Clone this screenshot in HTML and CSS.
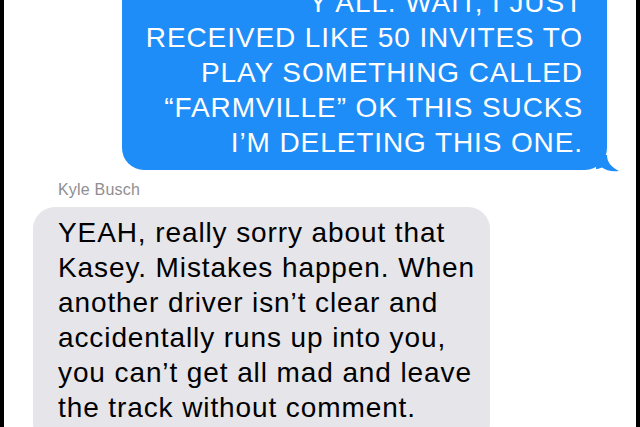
FILE: index.html
```html
<!DOCTYPE html>
<html lang="en">
<head>
  <meta charset="UTF-8" />
  <meta name="viewport" content="width=device-width, initial-scale=1.0"/>
  <title>Messages</title>
  <link rel="stylesheet" href="styles.css">
</head>
<body>
  <div id="thread">
    <div class="bubble sent">
      <p>Y’ALL. WAIT, I JUST<br>RECEIVED LIKE 50 INVITES TO<br>PLAY SOMETHING CALLED<br>“FARMVILLE” OK THIS SUCKS<br>I’M DELETING THIS ONE.</p>
      <svg class="tail" width="24" height="18" viewBox="0 0 24 18">
        <path d="M0 0 L11 0 C11 7 15 12 23 16 C16 17 10 15.5 6 12.5 C3 14 1 14 0 14 Z" fill="#1f8df7"/>
      </svg>
    </div>

    <div class="sender">Kyle Busch</div>
    <div class="bubble received">
      <p>YEAH, really sorry about that<br>Kasey. Mistakes happen. When<br>another driver isn’t clear and<br>accidentally runs up into you,<br>you can’t get all mad and leave<br>the track without comment.</p>
    </div>
  </div>
</body>
</html>
```

FILE: styles.css
```css
* {
  box-sizing: border-box;
  font-family: 'Liberation Sans', Arial, sans-serif;
}

html, body {
  margin: 0;
  padding: 0;
  height: 100%;
  overflow: hidden;
}

body {
  background: #000;
  padding: 0 4px;
}

#thread {
  background: #fff;
  height: 100%;
  overflow: hidden;
}

.bubble {
  position: relative;
  border-radius: 22px;
}

.bubble p {
  margin: 0;
}

.sent {
  background: #1f8df7;
  color: #fff;
  margin: -27px 29px 0 118px;
  padding: 12px 24px 10px 10px;
  text-align: right;
  font-size: 28px;
  line-height: 35px;
  letter-spacing: 0.9px;
}

.tail {
  position: absolute;
  right: -13px;
  bottom: -3px;
}

.sender {
  color: #8e8e93;
  font-size: 16px;
  line-height: 20px;
  letter-spacing: 0.2px;
  margin: 10px 0 7px 54px;
}

.received {
  background: #e5e5ea;
  color: #000;
  margin: 0 0 0 29px;
  width: 457px;
  padding: 8px 10px 20px 25px;
  font-size: 28px;
  line-height: 35px;
  letter-spacing: 0.9px;
}
```
